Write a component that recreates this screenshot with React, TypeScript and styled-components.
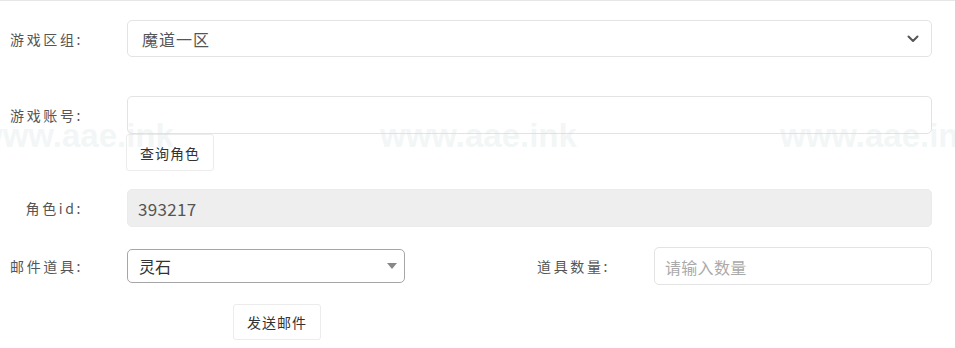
import React from "react";
import styled, { createGlobalStyle } from "styled-components";

const GlobalStyle = createGlobalStyle`
  body {
    margin: 0;
    background: #fff;
    font-family: "Noto Sans CJK SC", "Noto Sans", sans-serif;
    color: #555;
  }
`;

const Page = styled.div`
  position: relative;
  width: 955px;
  height: 348px;
  overflow: hidden;
  border-top: 1px solid #e6e6e6;
  box-sizing: border-box;
  padding: 19px 23px 0 0;
`;

const Row = styled.div<{ $top: number }>`
  display: grid;
  grid-template-columns: 83px 1fr;
  column-gap: 44px;
  align-items: start;
  margin-top: ${(p) => p.$top}px;
`;

const SplitRow = styled(Row)`
  grid-template-columns: 83px 278px 1fr 278px;
  align-items: center;
`;

const Label = styled.label<{ $h: number }>`
  height: ${(p) => p.$h}px;
  display: flex;
  align-items: center;
  justify-content: flex-end;
  font-size: 14px;
  letter-spacing: 2.6px;
  color: #555;
  white-space: nowrap;
`;

const Field = styled.div`
  display: flex;
  flex-direction: column;
  align-items: flex-start;
`;

const SelectWrap = styled.div`
  position: relative;
  width: 100%;
`;

const BigSelect = styled.select`
  appearance: none;
  width: 100%;
  height: 37px;
  box-sizing: border-box;
  border: 1px solid #e3e3e3;
  border-radius: 5px;
  background: #fff;
  padding: 0 40px 0 14px;
  font-family: inherit;
  font-size: 16px;
  letter-spacing: 1px;
  color: #555;
  outline: none;
`;

const SmallSelect = styled(BigSelect)`
  height: 34px;
  border-color: #a6a6a6;
  padding-left: 11px;
  color: #333;
  letter-spacing: 0;
`;

const Caret = styled.span<{ $right: number }>`
  position: absolute;
  right: ${(p) => p.$right}px;
  top: 50%;
  transform: translateY(-50%);
  display: flex;
  pointer-events: none;
`;

const TextInput = styled.input<{ $readOnlyLook?: boolean }>`
  width: 100%;
  height: 38px;
  box-sizing: border-box;
  border: 1px solid ${(p) => (p.$readOnlyLook ? "#ebebeb" : "#e3e3e3")};
  border-radius: 5px;
  background: ${(p) => (p.$readOnlyLook ? "#eeeeee" : "#fff")};
  padding: 0 10px;
  font-family: inherit;
  font-size: 17px;
  letter-spacing: 0.3px;
  color: #555;
  outline: none;

  &::placeholder {
    color: #aaa;
    font-size: 16px;
  }
`;

const Button = styled.button<{ $offset?: number; $h?: number }>`
  height: ${(p) => p.$h || 37}px;
  box-sizing: border-box;
  padding: 0 13px;
  margin-left: ${(p) => p.$offset || 0}px;
  justify-self: start;
  border: 1px solid #ececec;
  border-radius: 3px;
  background: #fff;
  font-family: inherit;
  font-size: 14px;
  letter-spacing: 1px;
  color: #333;
`;

const Watermark = styled.div<{ $left: number }>`
  position: absolute;
  top: 118px;
  left: ${(p) => p.$left}px;
  font-family: "Liberation Sans", Arial, sans-serif;
  font-weight: bold;
  font-size: 33px;
  line-height: 33px;
  color: rgba(205, 222, 222, 0.26);
  pointer-events: none;
  white-space: nowrap;
`;

const ChevronIcon = () => (
  <svg width="12" height="8" viewBox="0 0 12 8">
    <path d="M1.5 1.5 L6 6 L10.5 1.5" fill="none" stroke="#555" strokeWidth="2" strokeLinecap="round" strokeLinejoin="round" />
  </svg>
);

const TriangleIcon = () => (
  <svg width="10" height="6" viewBox="0 0 10 6">
    <path d="M0 0 L10 0 L5 6 Z" fill="#888" />
  </svg>
);

const App: React.FC = () => {
  return (
    <>
      <GlobalStyle />
      <Page>
        <Row $top={0}>
          <Label $h={37}>游戏区组:</Label>
          <SelectWrap>
            <BigSelect defaultValue="魔道一区">
              <option>魔道一区</option>
            </BigSelect>
            <Caret $right={13}>
              <ChevronIcon />
            </Caret>
          </SelectWrap>
        </Row>

        <Row $top={39}>
          <Label $h={38}>游戏账号:</Label>
          <Field>
            <TextInput type="text" />
            <Button type="button" $offset={-1}>查询角色</Button>
          </Field>
        </Row>

        <Row $top={18}>
          <Label $h={38}>角色id:</Label>
          <TextInput type="text" value="393217" readOnly $readOnlyLook />
        </Row>

        <SplitRow $top={20}>
          <Label $h={38}>邮件道具:</Label>
          <SelectWrap>
            <SmallSelect defaultValue="灵石">
              <option>灵石</option>
            </SmallSelect>
            <Caret $right={8}>
              <TriangleIcon />
            </Caret>
          </SelectWrap>
          <Label $h={38}>道具数量:</Label>
          <TextInput type="text" placeholder="请输入数量" />
        </SplitRow>

        <Row $top={19}>
          <div />
          <Button type="button" $offset={106} $h={36}>
            发送邮件
          </Button>
        </Row>

        <Watermark $left={-23}>www.aae.ink</Watermark>
        <Watermark $left={380}>www.aae.ink</Watermark>
        <Watermark $left={780}>www.aae.ink</Watermark>
      </Page>
    </>
  );
};

export default App;
